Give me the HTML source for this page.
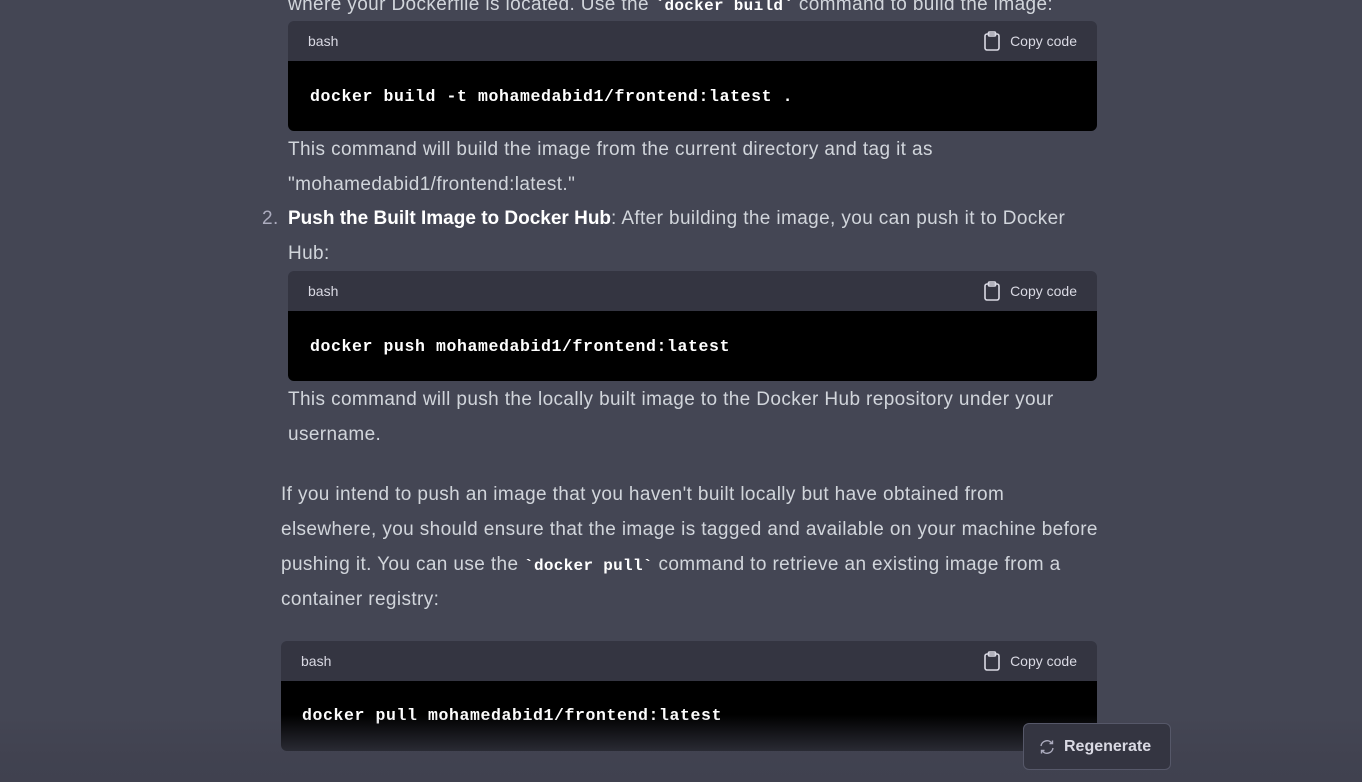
<!DOCTYPE html>
<html><head><style>
*{margin:0;padding:0;box-sizing:border-box}
body{width:1362px;height:782px;background:#444654;overflow:hidden;position:relative;font-family:"Liberation Sans",sans-serif;color:#d1d5db;font-size:19px;letter-spacing:0.38px}
.t{position:absolute;line-height:35px;white-space:nowrap}
.cb{position:absolute;border-radius:6px;overflow:hidden;width:809px}
.hd{height:40px;background:#343541;display:flex;align-items:center;justify-content:space-between;padding:0 20px;font-size:14px;letter-spacing:0;color:#d9d9e3}
.hd span.c{display:flex;align-items:center;gap:9px}
.bd{height:70px;background:#000;color:#fff;font-family:"Liberation Mono",monospace;font-weight:bold;font-size:16.5px;letter-spacing:0.6px;padding:0 22px;line-height:72px}
code{font-family:"Liberation Mono",monospace;font-weight:bold;color:#fff;font-size:16px;letter-spacing:0.3px}
b{color:#fff}
</style></head><body>
<div class="t" style="left:288px;top:-13px">where your Dockerfile is located. Use the <code>`docker build`</code> command to build the image:</div>
<div class="cb" style="left:288px;top:21px"><div class="hd"><span>bash</span><span class="c"><svg width="18" height="20" viewBox="0 0 18 20" fill="none" stroke="#d9d9e3" stroke-width="1.6"><rect x="2" y="3" width="14" height="16" rx="2"/><rect x="5.5" y="1" width="7" height="4" rx="1"/></svg>Copy code</span></div><div class="bd">docker build -t mohamedabid1/frontend:latest .</div></div>
<div class="t" style="left:288px;top:132px">This command will build the image from the current directory and tag it as</div>
<div class="t" style="left:288px;top:167px">"mohamedabid1/frontend:latest."</div>
<div class="t" style="left:262px;top:201px;color:#acacbe">2.</div>
<div class="t" style="left:288px;top:201px"><b style="letter-spacing:0">Push the Built Image to Docker Hub</b>: After building the image, you can push it to Docker</div>
<div class="t" style="left:288px;top:236px">Hub:</div>
<div class="cb" style="left:288px;top:271px"><div class="hd"><span>bash</span><span class="c"><svg width="18" height="20" viewBox="0 0 18 20" fill="none" stroke="#d9d9e3" stroke-width="1.6"><rect x="2" y="3" width="14" height="16" rx="2"/><rect x="5.5" y="1" width="7" height="4" rx="1"/></svg>Copy code</span></div><div class="bd">docker push mohamedabid1/frontend:latest</div></div>
<div class="t" style="left:288px;top:382px">This command will push the locally built image to the Docker Hub repository under your</div>
<div class="t" style="left:288px;top:417px">username.</div>
<div class="t" style="left:281px;top:477px">If you intend to push an image that you haven't built locally but have obtained from</div>
<div class="t" style="left:281px;top:512px">elsewhere, you should ensure that the image is tagged and available on your machine before</div>
<div class="t" style="left:281px;top:547px">pushing it. You can use the <code>`docker pull`</code> command to retrieve an existing image from a</div>
<div class="t" style="left:281px;top:582px">container registry:</div>
<div class="cb" style="left:281px;top:641px;width:816px"><div class="hd"><span>bash</span><span class="c"><svg width="18" height="20" viewBox="0 0 18 20" fill="none" stroke="#d9d9e3" stroke-width="1.6"><rect x="2" y="3" width="14" height="16" rx="2"/><rect x="5.5" y="1" width="7" height="4" rx="1"/></svg>Copy code</span></div><div class="bd" style="line-height:70px;padding-left:21px">docker pull mohamedabid1/frontend:latest</div></div>
<div style="position:absolute;left:0;top:715px;width:1362px;height:67px;background:linear-gradient(rgba(68,70,84,0),rgba(64,65,79,0.85) 70%,#40414f)"></div>
<div style="position:absolute;left:1023px;top:723px;width:148px;height:47px;border:1px solid #565869;border-radius:6px;background:#343541;display:flex;align-items:center;padding-left:15px;gap:9px;font-size:16px;letter-spacing:0;font-weight:bold;color:#d9d9e3"><svg width="16" height="16" viewBox="0 0 16 16" fill="none" stroke="#acacbe" stroke-width="1.4"><path d="M2 7a6 6 0 0 1 11-2.5M14 9a6 6 0 0 1-11 2.5"/><path d="M13.5 1.5v3h-3M2.5 14.5v-3h3"/></svg>Regenerate</div>
</body></html>
